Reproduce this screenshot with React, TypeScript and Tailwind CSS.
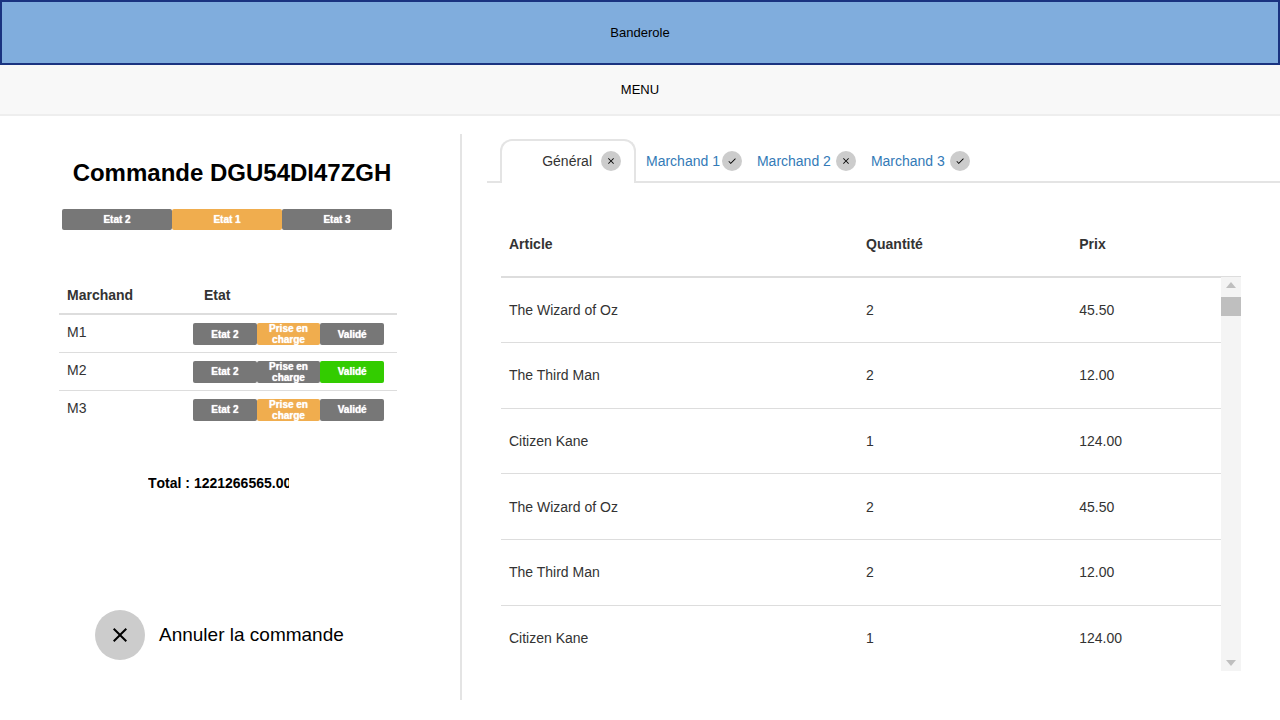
import { useState } from "react";

type Tone = "idle" | "active" | "done";

const tones: Record<Tone, string> = {
  idle: "bg-[#777777]",
  active: "bg-[#f0ad4e]",
  done: "bg-[#33cc00]",
};

function Step({ label, tone }: { label: string; tone: Tone }) {
  return (
    <li
      className={`flex min-w-0 flex-1 items-center justify-center overflow-hidden rounded-[2px] px-2 text-center text-[10px] leading-[11px] font-bold text-white [text-shadow:0_0_1px_white] ${tones[tone]}`}
    >
      {label}
    </li>
  );
}

function Cross({ className }: { className: string }) {
  return (
    <svg viewBox="0 0 24 24" aria-hidden="true" className={className}>
      <path
        d="M19 6.41 17.59 5 12 10.59 6.41 5 5 6.41 10.59 12 5 17.59 6.41 19 12 13.41 17.59 19 19 17.59 13.41 12z"
        fill="currentColor"
      />
    </svg>
  );
}

function Check({ className }: { className: string }) {
  return (
    <svg viewBox="0 0 24 24" aria-hidden="true" className={className}>
      <path d="M9 16.17 4.83 12l-1.42 1.41L9 19 21 7l-1.41-1.41z" fill="currentColor" />
    </svg>
  );
}

const merchants: { name: string; steps: Tone[] }[] = [
  { name: "M1", steps: ["idle", "active", "idle"] },
  { name: "M2", steps: ["idle", "idle", "done"] },
  { name: "M3", steps: ["idle", "active", "idle"] },
];

const tabs = [
  { label: "Général", ok: false, place: "w-[136px] justify-end gap-[9px] pr-[13px]" },
  { label: "Marchand 1", ok: true, place: "ml-[10px] gap-[2px]" },
  { label: "Marchand 2", ok: false, place: "ml-[15px] gap-[5px]" },
  { label: "Marchand 3", ok: true, place: "ml-[15px] gap-[5px]" },
];

const articles = [
  ["The Wizard of Oz", "2", "45.50"],
  ["The Third Man", "2", "12.00"],
  ["Citizen Kane", "1", "124.00"],
  ["The Wizard of Oz", "2", "45.50"],
  ["The Third Man", "2", "12.00"],
  ["Citizen Kane", "1", "124.00"],
];

export default function App() {
  const [selected, setSelected] = useState(0);

  return (
    <div className="min-h-screen bg-white font-['Liberation_Sans',Arial,sans-serif] text-[14px] leading-5 text-[#333333]">
      <header className="flex h-[65px] items-center justify-center border-2 border-[#1a3380] bg-[#80addd] text-[13px] text-black">
        Banderole
      </header>
      <nav className="flex h-[51px] items-center justify-center border-b-2 border-[#eeeeee] bg-[#f8f8f8] text-[13px] text-black">
        MENU
      </nav>

      <main className="grid grid-cols-[462fr_818fr] items-start pt-[18px]">
        <section className="border-r-2 border-[#e4e4e4] pt-6 pr-[63px] pb-10 pl-[59px]">
          <h1 className="pl-2 text-center text-2xl leading-[30px] font-bold whitespace-nowrap text-black">
            Commande DGU54DI47ZGH
          </h1>
          <ol className="mt-[21px] flex h-[21px] pr-[5px] pl-[3px]">
            <Step label="Etat 2" tone="idle" />
            <Step label="Etat 1" tone="active" />
            <Step label="Etat 3" tone="idle" />
          </ol>

          <table className="mt-[47px] w-full table-fixed text-left">
            <thead>
              <tr className="h-[37px] border-b-2 border-[#dddddd]">
                <th className="w-[134px] pl-2 font-bold">Marchand</th>
                <th className="pl-[11px] font-bold">Etat</th>
              </tr>
            </thead>
            <tbody>
              {merchants.map((m) => (
                <tr key={m.name} className="h-[38px] border-b border-[#dddddd] last:border-0">
                  <td className="pt-[7px] pl-2 align-top">{m.name}</td>
                  <td className="pt-2 pr-[13px] align-top">
                    <ol className="flex h-[22px]">
                      <Step label="Etat 2" tone={m.steps[0]} />
                      <Step label="Prise en charge" tone={m.steps[1]} />
                      <Step label="Validé" tone={m.steps[2]} />
                    </ol>
                  </td>
                </tr>
              ))}
            </tbody>
          </table>

          <p className="mt-[45px] ml-[89px] w-[141px] overflow-hidden font-bold whitespace-nowrap text-black [font-kerning:none]">
            Total : 1221266565.00
          </p>

          <button
            type="button"
            className="mt-[117px] ml-9 flex items-center gap-[14px] text-[19px] whitespace-nowrap text-black"
          >
            <span className="flex size-[50px] items-center justify-center rounded-full bg-[#cccccc]">
              <Cross className="size-6" />
            </span>
            Annuler la commande
          </button>
        </section>

        <section className="pt-[5px] pl-[25px]">
          <div role="tablist" className="flex h-11 border-b-2 border-[#e4e4e4] pl-[13px]">
            {tabs.map((tab, i) => (
              <button
                key={tab.label}
                type="button"
                role="tab"
                aria-selected={selected === i}
                onClick={() => setSelected(i)}
                className={`flex h-11 items-center ${tab.place} ${
                  selected === i
                    ? "rounded-t-xl border-2 border-b-0 border-[#e4e4e4] bg-white pb-[2px] text-[#333333]"
                    : "text-[#337ab7]"
                }`}
              >
                {tab.label}
                <span className="flex size-5 items-center justify-center rounded-full bg-[#cccccc] text-black">
                  {tab.ok ? <Check className="size-[10px]" /> : <Cross className="size-[10px]" />}
                </span>
              </button>
            ))}
          </div>

          <div className="mt-[29px] mr-[39px] ml-[14px] flex">
            <table className="h-[459px] flex-1 table-fixed text-left">
              <thead>
                <tr className="h-[65px] border-b-2 border-[#dddddd]">
                  <th className="w-[49.6%] pl-2 font-bold">Article</th>
                  <th className="w-[29.6%] pl-2 font-bold">Quantité</th>
                  <th className="pl-2 font-bold">Prix</th>
                </tr>
              </thead>
              <tbody>
                {articles.map(([name, quantity, price], i) => (
                  <tr key={i} className="h-[65px] border-b border-[#dddddd] last:border-0">
                    <td className="pl-2">{name}</td>
                    <td className="pl-2">{quantity}</td>
                    <td className="pl-2">{price}</td>
                  </tr>
                ))}
              </tbody>
            </table>
            <div aria-hidden="true" className="flex w-5 flex-col">
              <div className="h-[65px] border-b border-[#dddddd]" />
              <div className="flex flex-1 flex-col items-center bg-[#f4f4f4] text-[#bfbfbf]">
                <svg viewBox="0 0 20 20" className="size-5">
                  <path d="M5 11 10 5l5 6z" fill="currentColor" />
                </svg>
                <div className="h-[19px] w-full bg-[#bfbfbf]" />
                <svg viewBox="0 0 20 20" className="mt-auto size-5">
                  <path d="M5 9h10l-5 6z" fill="currentColor" />
                </svg>
              </div>
            </div>
          </div>
        </section>
      </main>
    </div>
  );
}
